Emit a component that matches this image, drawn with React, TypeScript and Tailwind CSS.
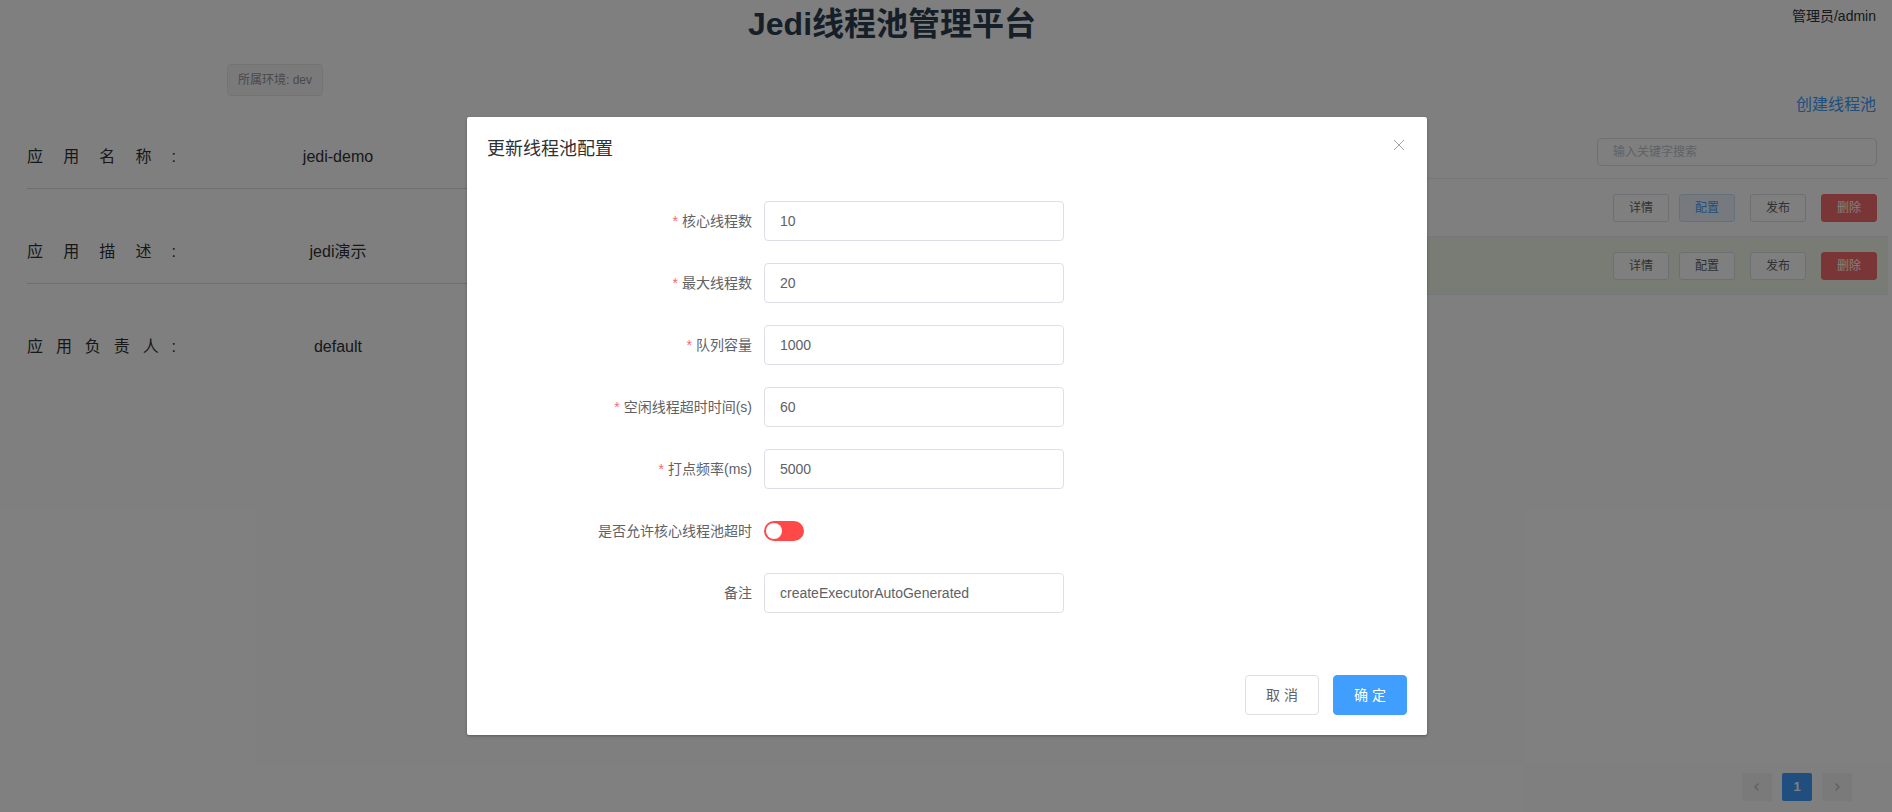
import React, { useState } from "react";

const FONT = { fontFamily: '"Liberation Sans", Arial, "Noto Sans CJK SC", sans-serif' };

type Field = { label: string; value?: string; required?: boolean; kind: "input" | "switch" };

const fields: Field[] = [
  { label: "核心线程数", value: "10", required: true, kind: "input" },
  { label: "最大线程数", value: "20", required: true, kind: "input" },
  { label: "队列容量", value: "1000", required: true, kind: "input" },
  { label: "空闲线程超时时间(s)", value: "60", required: true, kind: "input" },
  { label: "打点频率(ms)", value: "5000", required: true, kind: "input" },
  { label: "是否允许核心线程池超时", kind: "switch" },
  { label: "备注", value: "createExecutorAutoGenerated", kind: "input" },
];

const appInfo = [
  { label: "应 用 名 称 :", value: "jedi-demo" },
  { label: "应 用 描 述 :", value: "jedi演示" },
  { label: "应 用 负 责 人 :", value: "default" },
];

// Small mini button used in the table rows
const MiniButton = ({ children, variant = "default", className = "" }: { children: React.ReactNode; variant?: "default" | "focus" | "danger"; className?: string }) => {
  const styles = {
    default: "bg-white border-[#dcdfe6] text-[#606266]",
    focus: "bg-[#ecf5ff] border-[#c6e2ff] text-[#409eff]",
    danger: "bg-[#f56c6c] border-[#f56c6c] text-white",
  };
  return (
    <button className={`h-[28px] w-[56px] rounded-[3px] border text-[12px] ${styles[variant]} ${className}`}>
      {children}
    </button>
  );
};

const ActionButtons = ({ focused }: { focused?: boolean }) => (
  <div className="flex items-center">
    <MiniButton>详情</MiniButton>
    <MiniButton variant={focused ? "focus" : "default"} className="ml-[10px]">配置</MiniButton>
    <MiniButton className="ml-[15px]">发布</MiniButton>
    <MiniButton variant="danger" className="ml-[15px]">删除</MiniButton>
  </div>
);

const App = () => {
  const [allowTimeout, setAllowTimeout] = useState(false);

  return (
    <div className="relative flex h-screen w-full flex-col overflow-hidden bg-white" style={FONT}>
      {/* Header */}
      <div className="flex h-[48px] items-start">
        <h1 className="pl-[748px] text-[32px] font-bold leading-[48px] text-[#2c3e50]">Jedi线程池管理平台</h1>
        <span className="ml-auto mr-[16px] mt-[6px] text-[14px] leading-[20px] text-[#303133]">管理员/admin</span>
      </div>

      <div className="flex flex-1 pl-[27px] pr-[4px]">
        {/* Left: app info */}
        <div className="w-[473px]">
          <div className="ml-[200px] mt-[16px] inline-flex h-[32px] items-center rounded-[4px] border border-[#e9e9eb] bg-[#f4f4f5] px-[10px] text-[12px] text-[#909399]">
            所属环境: dev
          </div>
          {appInfo.map((row, i) => (
            <div
              key={row.label}
              className={`flex items-center pb-[19px] ${i === 0 ? "pt-[49px]" : "pt-[51px]"} ${i < appInfo.length - 1 ? "border-b border-[#dcdfe6]" : ""}`}
            >
              <span className="w-[149px] text-[16px] leading-[24px] text-[#303133] [text-align-last:justify]">{row.label}</span>
              <span className="flex-1 text-center text-[16px] leading-[24px] text-[#303133]">{row.value}</span>
            </div>
          ))}
        </div>

        {/* Right: table */}
        <div className="ml-[20px] flex flex-1 flex-col">
          <div className="mt-[45px] pr-[12px] text-right text-[16px] leading-[24px] text-[#409eff]">创建线程池</div>
          <div className="mt-[21px] flex justify-end pr-[11px]">
            <div className="flex h-[28px] w-[280px] items-center rounded-[4px] border border-[#dcdfe6] px-[15px] text-[12px] text-[#c0c4cc]">
              输入关键字搜索
            </div>
          </div>
          <div className="mt-[12px] border-t border-[#ebeef5]">
            <div className="flex h-[58px] items-center justify-end border-b border-[#ebeef5] pr-[11px]">
              <ActionButtons focused />
            </div>
            <div className="flex h-[58px] items-center justify-end border-b border-[#ebeef5] bg-[#f0f9eb] pr-[11px]">
              <ActionButtons />
            </div>
          </div>
          <div className="mt-[478px] flex justify-end gap-[10px] pr-[36px]">
            <button className="flex h-[28px] w-[30px] items-center justify-center rounded-[2px] bg-[#f4f4f5] text-[#c0c4cc]">
              <svg width="12" height="12" viewBox="0 0 12 12" fill="none" stroke="currentColor" strokeWidth="1.5"><path d="M7.5 2.5 4 6l3.5 3.5" /></svg>
            </button>
            <button className="h-[28px] w-[30px] rounded-[2px] bg-[#409eff] text-[13px] font-bold text-white">1</button>
            <button className="flex h-[28px] w-[30px] items-center justify-center rounded-[2px] bg-[#f4f4f5] text-[#c0c4cc]">
              <svg width="12" height="12" viewBox="0 0 12 12" fill="none" stroke="currentColor" strokeWidth="1.5"><path d="M4.5 2.5 8 6l-3.5 3.5" /></svg>
            </button>
          </div>
        </div>
      </div>

      {/* Dialog overlay */}
      <div className="absolute inset-0 flex justify-center bg-black/50 pl-[2px] pt-[117px]">
        <div className="h-fit w-[960px] rounded-[2px] bg-white shadow-[0_1px_3px_rgba(0,0,0,0.3)]">
          <div className="relative px-[20px] pb-[10px] pt-[20px]">
            <span className="text-[18px] leading-[24px] text-[#303133]">更新线程池配置</span>
            <button className="absolute right-[20px] top-[20px] flex h-[16px] w-[16px] items-center justify-center text-[#a0a3a8]">
              <svg width="12" height="12" viewBox="0 0 12 12" stroke="currentColor" strokeWidth="1"><path d="M1 1l10 10M11 1 1 11" /></svg>
            </button>
          </div>

          <div className="px-[20px] pb-[30px] pt-[29px] text-[14px] text-[#606266]">
            {fields.map((f) => (
              <div key={f.label} className="mb-[22px] flex h-[40px] items-center">
                <label className="w-[277px] pr-[12px] text-right leading-[40px]">
                  {f.required && <span className="mr-[4px] text-[#f56c6c]">*</span>}
                  {f.label}
                </label>
                {f.kind === "input" ? (
                  <input
                    readOnly
                    value={f.value}
                    className="h-[40px] w-[300px] rounded-[4px] border border-[#dcdfe6] px-[15px] text-[14px] text-[#606266] outline-none"
                  />
                ) : (
                  <button
                    onClick={() => setAllowTimeout(!allowTimeout)}
                    className={`relative h-[20px] w-[40px] rounded-[10px] ${allowTimeout ? "bg-[#13ce66]" : "bg-[#ff4949]"}`}
                  >
                    <span className={`absolute top-[2px] h-[16px] w-[16px] rounded-full bg-white ${allowTimeout ? "left-[22px]" : "left-[2px]"}`} />
                  </button>
                )}
              </div>
            ))}
          </div>

          <div className="flex justify-end px-[20px] pb-[20px] pt-[10px]">
            <button className="h-[40px] w-[74px] rounded-[4px] border border-[#dcdfe6] bg-white text-[14px] text-[#606266]">取 消</button>
            <button className="ml-[14px] h-[40px] w-[74px] rounded-[4px] border border-[#409eff] bg-[#409eff] text-[14px] text-white">确 定</button>
          </div>
        </div>
      </div>
    </div>
  );
};

export default App;
